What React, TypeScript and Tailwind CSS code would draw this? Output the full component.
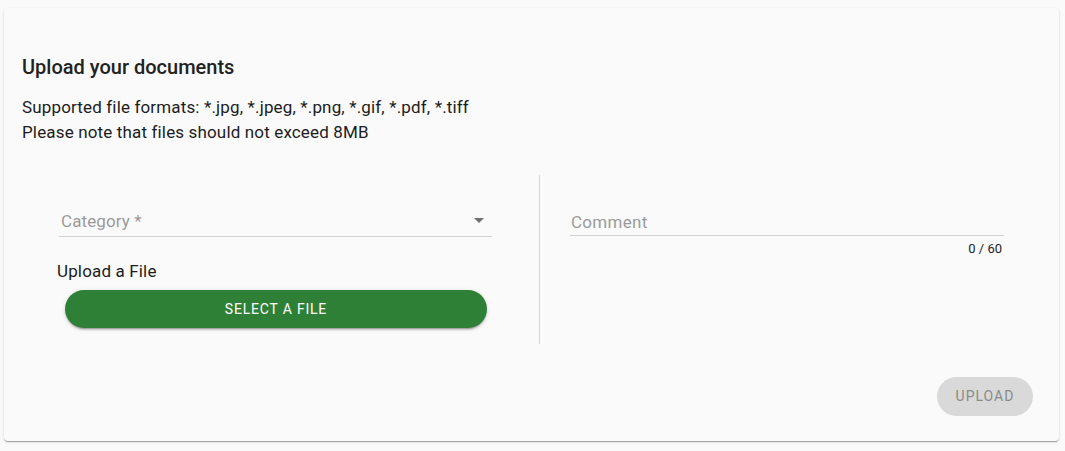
import React from 'react';

function CategorySelect() {
  return (
    <div className="ml-[37px] mr-[47px] mt-[34px] flex items-center justify-between border-b border-[#d2d2d2] pb-[3px]">
      <span className="h-6 pl-[2px] text-[17px] leading-6 tracking-[0.1px] text-[#9a9a9a]">Category *</span>
      <svg width="24" height="24" viewBox="0 0 24 24" className="mr-[1px] -mt-[2px] text-[#6f6f6f]">
        <path d="M7 10l5 5 5-5z" fill="currentColor" />
      </svg>
    </div>
  );
}

export default function App() {
  return (
    <div className="min-h-[451px] w-full bg-[#fafafa] pt-[8px] pl-[4px]" style={{ fontFamily: 'Roboto, "Liberation Sans", sans-serif' }}>
      <div className="flex h-[433px] w-[1055px] flex-col rounded-[4px] bg-[#fafafa] px-[18px] pt-[47px] shadow-[0_2px_1px_-1px_rgba(0,0,0,0.2),0_1px_1px_0_rgba(0,0,0,0.14),0_1px_3px_0_rgba(0,0,0,0.12)]">
        <h2 className="text-[20px] font-medium leading-6 text-[#222]">Upload your documents</h2>
        <div className="mt-[16px] text-[17px] leading-[25px] tracking-[0.15px] text-[#1c1c1c]">
          <p>Supported file formats: *.jpg, *.jpeg, *.png, *.gif, *.pdf, *.tiff</p>
          <p>Please note that files should not exceed 8MB</p>
        </div>

        <div className="mt-[30px] flex h-[169px]">
          <div className="w-[518px] shrink-0 border-r border-[#d6d6d6]">
            <CategorySelect />
            <div className="ml-[35px] mt-[22px] text-[17px] leading-6 tracking-[0.15px] text-[#1c1c1c]">Upload a File</div>
            <button className="ml-[43px] mt-[7px] flex h-[38px] w-[422px] items-center justify-center rounded-full bg-[#2e8037] text-[14px] font-normal uppercase tracking-[0.8px] text-white shadow-[0_3px_1px_-2px_rgba(0,0,0,0.2),0_2px_2px_0_rgba(0,0,0,0.14),0_1px_5px_0_rgba(0,0,0,0.12)]">
              Select a file
            </button>
          </div>
          <div className="flex-1">
            <div className="ml-[30px] mr-[37px] mt-[35px] border-b border-[#d2d2d2] pb-[1px]">
              <span className="block h-6 pl-[1px] text-[17px] leading-6 tracking-[0.3px] text-[#9a9a9a]">Comment</span>
            </div>
            <div className="mr-[39px] mt-[5px] text-right text-[13px] leading-4 text-[#222]">0 / 60</div>
          </div>
        </div>

        <div className="mt-[33px] flex justify-end pr-[8px]">
          <button className="flex h-[39px] w-[96px] items-center justify-center rounded-full bg-[#d9d9d9] text-[14px] font-normal uppercase tracking-[1px] text-[#8a8a8a]">
            Upload
          </button>
        </div>
      </div>
    </div>
  );
}
